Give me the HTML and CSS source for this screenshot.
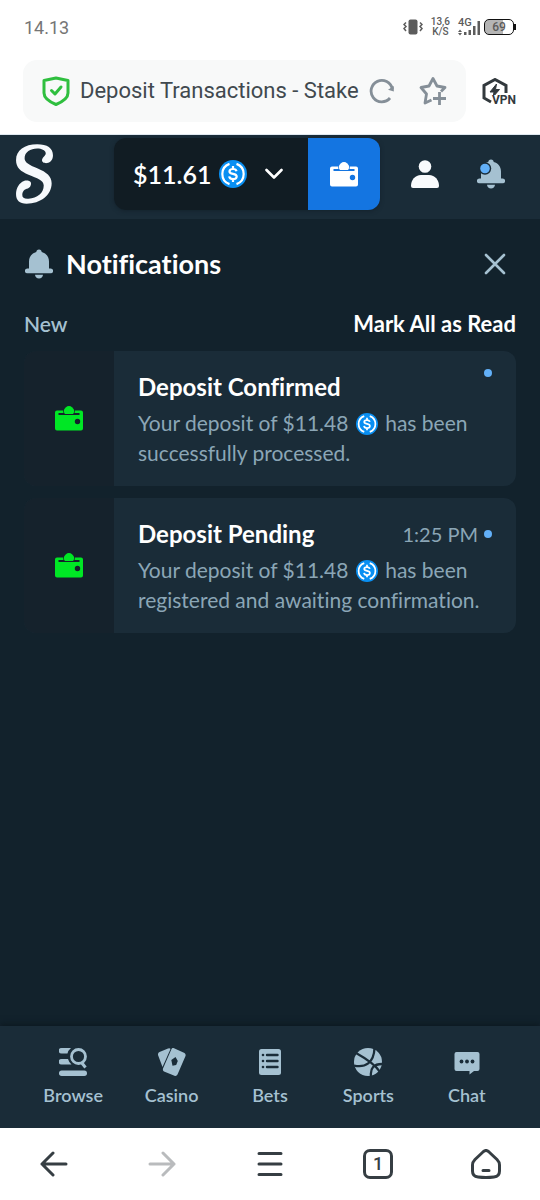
FILE: index.html
```html
<!DOCTYPE html>
<html lang="en">
<head>
<meta charset="utf-8">
<meta name="viewport" content="width=device-width, initial-scale=1">
<title>Deposit Transactions - Stake</title>
<link rel="stylesheet" href="styles.css">
</head>
<body>
<svg class="defs" aria-hidden="true">
  <symbol id="wallet" viewBox="0 0 28 26">
    <path fill-rule="evenodd" d="M2 5.500H8.200A6 6 0 0 0 8.500 8H3.500V10H24.500V8H19.500A6 6 0 0 0 19.800 5.500H26A2 2 0 0 1 28 7.500V23.500A2 2 0 0 1 26 25.500H2A2 2 0 0 1 0 23.500V7.500A2 2 0 0 1 2 5.500ZM22.500 13.800A2.700 2.700 0 1 0 22.500 19.200A2.700 2.700 0 1 0 22.500 13.800Z"/>
    <path d="M9.900 9A5 5 0 1 1 18.100 9Z"/>
  </symbol>
  <symbol id="bell" viewBox="0 0 28 30">
    <path d="M14 0.500C12.300 0.500 11.400 1.700 11.300 3C6.700 4.200 4 8 4 12.500V19.500H2.300A2.400 2.400 0 0 0 2.300 24.300H25.700A2.400 2.400 0 0 0 25.700 19.500H24V12.500C24 8 21.300 4.200 16.700 3C16.600 1.700 15.700 .5 14 .5Z"/>
    <path d="M10 25.800H18C17.800 28.200 16.200 29.500 14 29.500S10.200 28.200 10 25.800Z"/>
  </symbol>
  <symbol id="usdc" viewBox="0 0 28 28">
    <circle cx="14" cy="14" r="14" fill="#098ff2"/>
    <g fill="none" stroke="#fff" stroke-width="2.200">
      <path d="M10.500 3.900A10.700 10.700 0 0 0 10.500 24.100M17.500 3.900A10.700 10.700 0 0 1 17.500 24.100"/>
      <path d="M14 6V9M14 19V22M17.500 11.300C17.200 9.800 16 9 14 9C11.800 9 10.500 10 10.500 11.500C10.500 15 17.700 12.800 17.700 16.500C17.700 18.100 16.200 19.100 14 19.100C11.800 19.100 10.400 18 10.200 16.400"/>
    </g>
  </symbol>
</svg>

<div class="screen">
  <div class="status">
    <span class="clock">14.13</span>
    <div class="signals">
      <svg width="20" height="16" viewBox="0 0 20 16"><rect x="5.500" y="0.500" width="9" height="15" rx="2" fill="#5c5c5c"/><path d="M3 3.500L1 5.500L3 7.500L1 9.500L3 12M17 3.500L19 5.500L17 7.500L19 9.500L17 12" fill="none" stroke="#5c5c5c" stroke-width="1.500"/></svg>
      <span class="speed">13,6<br>K/S</span>
      <span class="network">
        <span class="network-type">4G</span>
        <svg width="22" height="16" viewBox="0 0 22 16" fill="#5c5c5c"><path d="M0 12L2 9.500L4 12ZM0 13L2 15.500L4 13Z"/><rect x="6" y="12" width="2.500" height="3"/><rect x="10.500" y="10" width="2.500" height="5"/><rect x="15" y="6" width="2.500" height="9"/><rect x="19.500" y="1" width="2.500" height="14"/></svg>
      </span>
      <span class="battery">69</span>
    </div>
  </div>

  <div class="address">
    <div class="address-field">
      <svg width="28" height="30" viewBox="0 0 28 30" fill="none" stroke="#2fbf3f" stroke-width="3" stroke-linejoin="round" stroke-linecap="round"><path d="M14 2L26 4.500V17C26 22.500 20 26 14 28.500C8 26 2 22.500 2 17V4.500Z"/><path d="M9.500 14.500L13 18L19 11"/></svg>
      <input class="address-input" type="text" aria-label="Address" value="Deposit Transactions - Stake">
      <button class="plain reload" aria-label="Reload"><svg width="26" height="26" viewBox="0 0 26 26" fill="none" stroke="#858f98" stroke-width="2.800"><path d="M21 20A10.700 10.700 0 1 1 23.300 11"/><path d="M19 11.800L24.800 13.500V8" fill="#858f98" stroke="none"/></svg></button>
      <button class="plain" aria-label="Add bookmark"><svg width="28" height="30" viewBox="0 0 28 30" fill="none" stroke="#858f98" stroke-width="2.800" stroke-linejoin="round"><path d="M12.500 24L6 27L7.500 18L2 11.500L10 10L14 2.500L18 10L26 11.500L22 15.500"/><path d="M20.500 16V29M14 22.500H27"/></svg></button>
    </div>
    <button class="plain vpn" aria-label="VPN">
      <svg width="27" height="26" viewBox="0 0 27 26"><path d="M9 24L2 20V7.500L13 1.500L24 7.500V15" fill="none" stroke="#32393d" stroke-width="3"/><path d="M14.500 6L8 14H12L11 19L17.500 11.500H13.500Z" fill="#32393d" stroke="#32393d"/></svg>
      <span class="vpn-label">VPN</span>
    </button>
  </div>

  <header class="header">
    <a class="logo" href="#" aria-label="Home"><svg width="39" height="62" viewBox="45 38 118 188"><path fill="#f6f9fc" d="M127 88C125 96 134 100 142 99C153 97 160 88 160 75C160 54 143 42 112 42C74 42 48 60 48 90C48 112 62 124 86 134C112 145 132 150 132 167C132 190 112 206 86 207C74 208 67 205 67 196C67 184 74 178 84 176C90 174 95 166 93 158C90 152 80 151 72 153C58 158 48 175 48 193C48 212 58 222 80 222C122 222 156 196 156 160C156 138 140 126 114 115C90 105 74 98 74 84C74 66 92 55 112 55C126 55 136 60 138 68C139 76 129 80 127 88Z"/></svg></a>
    <div class="balance">
      <button class="balance-amount">$11.61
        <svg width="28" height="28"><use href="#usdc"/></svg>
        <svg class="chevron" width="18" height="12" viewBox="0 0 18 12" fill="none" stroke="#fff" stroke-width="2.600" stroke-linecap="round" stroke-linejoin="round"><path d="M1.500 2L9 9.500L16.500 2"/></svg>
      </button>
      <button class="balance-wallet" aria-label="Wallet"><svg width="28" height="26"><use href="#wallet"/></svg></button>
    </div>
    <div class="header-actions">
      <button class="plain" aria-label="Account"><svg width="28" height="28" viewBox="0 0 28 28" fill="#f8fafc"><circle cx="14" cy="6.500" r="6.300"/><path d="M10 15H18C24 15 28 20 28 26Q28 28 26 28H2Q0 28 0 26C0 20 4 15 10 15Z"/></svg></button>
      <button class="plain bell-button" aria-label="Notifications"><svg width="28" height="30" viewBox="0 0 28 30"><use href="#bell" width="28" height="30"/><circle cx="8" cy="9.500" r="6.200" fill="#1a2c38"/><circle cx="8" cy="9.500" r="4.800" fill="#62b0f8"/></svg></button>
    </div>
  </header>

  <main class="panel">
    <div class="panel-head">
      <svg class="muted" width="28" height="30"><use href="#bell"/></svg>
      <h1 class="panel-title">Notifications</h1>
      <button class="plain" aria-label="Close"><svg width="22" height="22" viewBox="0 0 22 22" stroke="#a5c1d1" stroke-width="2.600" stroke-linecap="round"><path d="M2 2L20 20M20 2L2 20"/></svg></button>
    </div>
    <div class="section-head">
      <h2 class="section-title">New</h2>
      <button class="mark-read">Mark All as Read</button>
    </div>
    <div class="cards">
      <article class="card">
        <div class="card-icon"><svg width="28" height="26"><use href="#wallet"/></svg></div>
        <div class="card-body">
          <div class="card-head"><h3 class="card-title">Deposit Confirmed</h3><span class="dot dot-top"></span></div>
          <p class="card-text">Your deposit of $11.48 <svg class="coin" width="22" height="22"><use href="#usdc"/></svg> has been <br>successfully processed.</p>
        </div>
      </article>
      <article class="card">
        <div class="card-icon"><svg width="28" height="26"><use href="#wallet"/></svg></div>
        <div class="card-body">
          <div class="card-head"><h3 class="card-title">Deposit Pending</h3><time class="card-time">1:25 PM</time><span class="dot"></span></div>
          <p class="card-text">Your deposit of $11.48 <svg class="coin" width="22" height="22"><use href="#usdc"/></svg> has been <br>registered and awaiting confirmation.</p>
        </div>
      </article>
    </div>
  </main>

  <nav class="tabs">
    <a class="tab" href="#"><svg width="28" height="28" viewBox="0 0 28 28"><path d="M2.500 0H12Q9 2.500 8.500 5.500H2.500A2.700 2.700 0 0 1 2.500 0ZM2.500 11H9Q10 14.500 12.500 16.500H2.500A2.700 2.700 0 0 1 2.500 11Z"/><rect y="22.500" width="28" height="5.500" rx="2.700"/><path d="M22.500 14.500L26.500 19.500" stroke="#a5c1d1" stroke-width="3"/><circle cx="19.500" cy="8.500" r="7" fill="none" stroke="#a5c1d1" stroke-width="2.800"/></svg>Browse</a>
    <a class="tab" href="#"><svg width="28" height="28" viewBox="0 0 28 28"><path d="M1.500 4L10 .5Q12 0 12.500 1L4.500 19L0 7Q-.3 5 1.500 4Z"/><path fill-rule="evenodd" d="M15.500 0L26.500 5Q28 6 27.500 8L19.500 26.500Q18.500 28.500 16.500 27.800L6 23.500Q4.500 22.500 5 20.500L13.500 1Q14.300 -.3 15.500 0ZM17.500 9L13.300 12L14.500 17.800L18.200 17L19.800 13Z"/></svg>Casino</a>
    <a class="tab" href="#"><svg width="28" height="28" viewBox="0 0 28 28"><rect x="3" y="1" width="22" height="26" rx="2.500"/><path d="M11 7H21.500M11 13H21.500M11 19H21.500" stroke="#1a2c38" stroke-width="2.400" stroke-linecap="round"/><g fill="#1a2c38"><circle cx="7" cy="7" r="1.300"/><circle cx="7" cy="13" r="1.300"/><circle cx="7" cy="19" r="1.300"/></g></svg>Bets</a>
    <a class="tab" href="#"><svg width="28" height="28" viewBox="0 0 28 28"><circle cx="14" cy="14" r="14"/><path d="M2 5C11 10 21 16 26 24M0 17.500C11 20 20 15 20.500 0M28 16C20 16 16 20 17 28" fill="none" stroke="#1a2c38" stroke-width="2.300"/></svg>Sports</a>
    <a class="tab" href="#"><svg width="28" height="28" viewBox="0 0 28 28"><path d="M3.500 4H24.500A2 2 0 0 1 26.500 6V21A2 2 0 0 1 24.500 23H21L16.500 26.500V23H3.500A2 2 0 0 1 1.500 21V6A2 2 0 0 1 3.500 4Z"/><g fill="#1a2c38"><circle cx="8.500" cy="13.500" r="1.900"/><circle cx="14" cy="13.500" r="1.900"/><circle cx="19.500" cy="13.500" r="1.900"/></g></svg>Chat</a>
  </nav>

  <div class="toolbar">
    <button class="plain" aria-label="Back"><svg width="28" height="26" viewBox="0 0 28 26"><path d="M26 13H2M13 2L2 13L13 24"/></svg></button>
    <button class="plain forward" aria-label="Forward" disabled><svg width="28" height="26" viewBox="0 0 28 26"><path d="M2 13H26M15 2L26 13L15 24"/></svg></button>
    <button class="plain" aria-label="Menu"><svg width="26" height="26" viewBox="0 0 26 26"><path d="M2 2.500H24M2 13H24M2 23.500H24"/></svg></button>
    <button class="plain" aria-label="Open tabs"><span class="tab-count">1</span></button>
    <button class="plain" aria-label="Home"><svg width="30" height="30" viewBox="0 0 30 30"><path d="M12.500 2.500Q15 .500 17.500 2.500L26 10.500Q28.500 13 28.500 16V22Q28.500 27.500 23 28Q15 29 7 28Q1.500 27.500 1.500 22V16Q1.500 13 4 10.500ZM12 21.500H18"/></svg></button>
  </div>
</div>
</body>
</html>
```
FILE: styles.css
```css
* { box-sizing: border-box; }
body {
  margin: 0;
  background: #fff;
  font-family: Lato, "Open Sans", sans-serif;
  font-variant-ligatures: none;
}
svg { display: block; flex: none; }
h1, h2, h3, p { margin: 0; }
button, input { font: inherit; color: inherit; border: 0; padding: 0; background: none; }
a { color: inherit; text-decoration: none; }
.defs { position: absolute; width: 0; height: 0; }
.screen { display: flex; flex-direction: column; min-height: 100vh; }
.plain { display: flex; align-items: center; justify-content: center; }

/* phone status bar */
.status {
  display: flex;
  align-items: center;
  justify-content: space-between;
  height: 54px;
  padding: 0 26px 0 24px;
  font-family: Roboto, sans-serif;
  color: #5c5c5c;
}
.clock { font-size: 18px; color: #757575; }
.signals { display: flex; align-items: center; gap: 8px; }
.speed { font-size: 10px; line-height: 10px; text-align: center; font-weight: 500; }
.network { position: relative; display: flex; align-items: flex-end; height: 18px; }
.network-type { position: absolute; top: 0; left: 0; font-size: 11px; line-height: 10px; font-weight: 500; }
.battery {
  position: relative;
  width: 30px;
  height: 16px;
  margin-left: -4px;
  border: 1px solid #111;
  border-radius: 5px;
  background: linear-gradient(90deg, #b5b5b5 66%, #fff 66%);
  font-size: 12px;
  line-height: 14px;
  font-weight: 500;
  text-align: center;
}
.battery::after {
  content: "";
  position: absolute;
  right: -3px;
  top: 4px;
  width: 2px;
  height: 6px;
  background: #111;
}

/* browser address bar */
.address {
  position: relative;
  z-index: 1;
  display: flex;
  align-items: center;
  padding: 6px 24px 12px 23px;
  border-bottom: 1px solid #dfe8ef;
  background: #fff;
  font-family: Roboto, sans-serif;
}
.address-field {
  display: flex;
  align-items: center;
  flex: 1;
  min-width: 0;
  height: 62px;
  padding: 0 19px;
  border-radius: 14px;
  background: #f8f9f9;
}
.address-input {
  flex: 1;
  min-width: 0;
  margin: 0 8px 0 10px;
  font-size: 22px;
  line-height: 30px;
  color: #41494f;
}
.reload { margin-right: 24px; }
.vpn { position: relative; width: 34px; margin-left: 16px; justify-content: flex-start; }
.vpn-label {
  position: absolute;
  right: 0;
  bottom: -2px;
  background: #fff;
  color: #32393d;
  font-size: 12px;
  line-height: 11px;
  font-weight: 700;
}

/* site header */
.header {
  display: flex;
  align-items: center;
  padding: 3px 16px 9px 15px;
  background: #1a2c38;
  box-shadow: 0 2px 6px #0d1920;
}
.balance {
  display: flex;
  height: 72px;
  margin: 0 12px 0 auto;
  border-radius: 12px;
  overflow: hidden;
  box-shadow: 0 1px 4px #14222c;
}
.balance-amount {
  display: flex;
  align-items: center;
  width: 194px;
  padding-left: 19px;
  gap: 8px;
  background: #111c23;
  color: #fff;
  font-size: 25px;
  font-weight: 600;
}
.chevron { margin-left: 10px; }
.balance-wallet {
  display: flex;
  align-items: center;
  justify-content: center;
  width: 72px;
  background: #1475e1;
  fill: #fff;
}
.header-actions { display: grid; grid-template-columns: 66px 66px; }
.bell-button, .muted { fill: #a5c1d1; }

/* notifications */
.panel { flex: 1; padding: 23px 24px 24px; background: #12222c; color: #fff; }
.panel-head { display: flex; align-items: center; gap: 13px; height: 44px; padding: 0 10px 0 1px; }
.panel-title { flex: 1; font-size: 27px; line-height: 32px; font-weight: 700; }
.section-head {
  display: flex;
  align-items: center;
  justify-content: space-between;
  margin: 25px 0 14px;
  line-height: 26px;
}
.section-title { font-size: 21px; font-weight: 600; color: #a5c1d1; }
.mark-read { font-size: 22px; font-weight: 700; }
.cards { display: grid; gap: 12px; }
.card {
  display: grid;
  grid-template-columns: 90px 1fr;
  border-radius: 12px;
  overflow: hidden;
  background: #1a2c38;
}
.card-icon { display: grid; place-items: center; padding-bottom: 2px; background: #15222c; fill: #00e725; }
.card-body { padding: 18px 24px 18px; }
.card-head { display: flex; align-items: center; gap: 6px; margin-bottom: 3px; }
.card-title { flex: 1; font-size: 24px; line-height: 36px; font-weight: 700; }
.card-time { font-size: 20px; color: #8ba6b6; }
.dot { width: 8px; height: 8px; border-radius: 50%; background: #62b0f8; }
.dot-top { align-self: flex-start; }
.card-text { font-size: 21px; line-height: 30px; color: #8ba6b6; }
.coin { display: inline-block; vertical-align: -4px; margin: 0 2px; }

/* site navigation */
.tabs {
  display: grid;
  grid-template-columns: repeat(5, 1fr);
  padding: 22px 24px 21px;
  background: #1a2c38;
  box-shadow: 0 -2px 6px #0d1920;
}
.tab {
  display: flex;
  flex-direction: column;
  align-items: center;
  gap: 7px;
  color: #a5c1d1;
  fill: #a5c1d1;
  font-size: 18px;
  line-height: 24px;
  font-weight: 600;
}

/* browser toolbar */
.toolbar {
  position: relative;
  display: grid;
  grid-template-columns: repeat(5, 1fr);
  height: 72px;
  background: #fff;
  font-family: Roboto, sans-serif;
  color: #363e43;
  fill: none;
  stroke: #363e43;
  stroke-width: 3;
  stroke-linecap: round;
  stroke-linejoin: round;
}
.forward { stroke: #b9bbbd; }
.tab-count {
  width: 30px;
  height: 30px;
  border: 3px solid #363e43;
  border-radius: 7px;
  font-size: 18px;
  line-height: 24px;
  font-weight: 500;
}
```
